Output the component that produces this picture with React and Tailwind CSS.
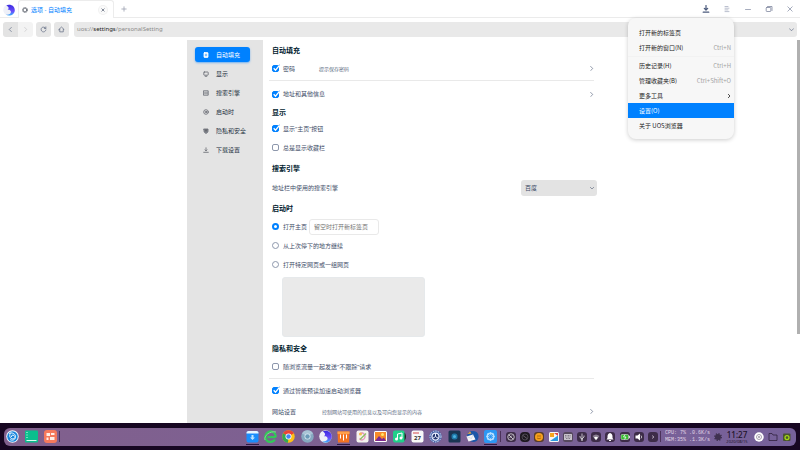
import React, { useState } from 'react';

const line = { fill: 'none', stroke: 'currentColor', strokeWidth: 1, strokeLinecap: 'round', strokeLinejoin: 'round' };

function Chevron({ dir = 'right', className = 'size-[6px]', weight = '.8' }) {
  const paths = { right: 'M2 .5 4.5 3 2 5.5', left: 'M4 .5 1.5 3 4 5.5', down: 'M.5 2 3 4.5 5.5 2' };
  return (
    <svg viewBox="0 0 6 6" className={className} {...line} strokeWidth={weight}>
      <path d={paths[dir]} />
    </svg>
  );
}

function BrowserLogo({ className }) {
  return (
    <svg viewBox="0 0 26 26" className={className}>
      <defs>
        <linearGradient id="moon" x1="0" y1="0" x2="0" y2="1">
          <stop offset="0" stopColor="#3b2be0" />
          <stop offset=".6" stopColor="#6a4dfa" />
          <stop offset="1" stopColor="#38b4fb" />
        </linearGradient>
      </defs>
      <circle cx="13" cy="13" r="12.5" fill="#eef0f8" />
      <path d="M7 3C17-1 26 5 25.500 14c-1 10-12 14-19.500 9 8 1 12-3 11-7-1-3-4-4-7-3 4-4 2-8-3-10Z" fill="url(#moon)" />
    </svg>
  );
}

/* ---------- window chrome ---------- */

function TabBar() {
  const control = 'flex h-full w-[21px] items-center justify-center';
  return (
    <header className="flex h-[18px] shrink-0 items-stretch border-b border-[#ebebeb]">
      <div className="flex w-[18px] items-center justify-center pt-[2px]">
        <BrowserLogo className="size-[12px]" />
      </div>
      <div className="-mb-px flex w-[96px] items-center rounded-t-[3px] border-x border-t border-[#ececec] bg-white pr-[6px] pl-[3px]">
        <svg viewBox="0 0 6 6" className="size-[6px] text-[#555b66]" {...line}>
          <circle cx="3" cy="3" r="1.9" strokeWidth=".8" />
          <circle cx="3" cy="3" r="2.6" strokeWidth=".5" strokeDasharray="1 1" />
        </svg>
        <span className="ml-[3px] text-[6px] leading-[8px] text-[#0081ff]">选项 - 自动填充</span>
        <button aria-label="关闭标签页" className="ml-auto flex size-[8px] items-center justify-center rounded-full bg-[#fafafa] text-[#505a6e] ring-1 ring-[#f1f1f1]">
          <svg viewBox="0 0 4 4" className="size-[4px]" {...line} strokeWidth=".7"><path d="m.8.8 2.400 2.400M3.200.8.8 3.200" /></svg>
        </button>
      </div>
      <button aria-label="新建标签页" className="flex w-[19px] items-center justify-center text-[#9aa0ae]">
        <svg viewBox="0 0 6 6" className="size-[6px]" {...line} strokeWidth=".8"><path d="M3 .8v4.400M.8 3h4.400" /></svg>
      </button>
      <div className="ml-auto flex text-[#8088a0]">
        <button aria-label="下载" className={`${control} text-[#4b5a7c]`}>
          <svg viewBox="0 0 8 8" className="size-[8px]" {...line}><path d="M4 .5v4.2M2.3 3.3 4 5l1.700-1.700M1.200 7.200h5.600" strokeWidth="1.200" /></svg>
        </button>
        <button aria-label="菜单" className={`${control} text-[#b3b9c8]`}>
          <svg viewBox="0 0 8 8" className="size-[8px]" {...line} strokeWidth=".9"><path d="M2 1.500h3M2 3.200h4M2 4.900h3M2 6.600h4" /></svg>
        </button>
        <button aria-label="最小化" className={control}>
          <svg viewBox="0 0 6 6" className="size-[6px]" {...line} strokeWidth=".7"><path d="M.5 3.500h5" /></svg>
        </button>
        <button aria-label="还原" className={control}>
          <svg viewBox="0 0 8 8" className="size-[8px]" {...line} strokeWidth=".8"><rect x="1.200" y="2.500" width="4.600" height="4" rx=".6" /><path d="M2.500 1.500h4.500v4" /></svg>
        </button>
        <button aria-label="关闭" className={control}>
          <svg viewBox="0 0 6 6" className="size-[6px]" {...line} strokeWidth=".7"><path d="m.8.8 4.400 4.400M5.200.8.8 5.200" /></svg>
        </button>
      </div>
    </header>
  );
}

function AddressBar() {
  const box = 'flex h-[15px] w-[15px] items-center justify-center';
  return (
    <div className="flex h-[22px] shrink-0 items-center gap-[3px] px-[3px] text-[#5b6780]">
      <div className="flex overflow-hidden rounded-[3px]">
        <button aria-label="后退" className={`${box} bg-[#e3e3e3]`}><Chevron dir="left" className="size-[5px]" /></button>
        <button aria-label="前进" className={`${box} bg-[#f3f3f3] text-[#c3c3c6]`}><Chevron className="size-[5px]" /></button>
      </div>
      <button aria-label="刷新" className={`${box} rounded-[3px] bg-[#e6e6e6]`}>
        <svg viewBox="0 0 8 8" className="size-[7px]" {...line} strokeWidth=".8"><path d="M6.500 2.600A2.800 2.800 0 1 0 6.800 4.500M6.700 1v1.800H5" /></svg>
      </button>
      <button aria-label="主页" className={`${box} rounded-[3px] bg-[#e6e6e6]`}>
        <svg viewBox="0 0 8 8" className="size-[7px]" {...line} strokeWidth=".8"><path d="M1 4 4 1.200 7 4H6v2.700H2V4Z" /></svg>
      </button>
      <div className="ml-[2px] flex h-[15px] flex-1 items-center rounded-[3px] bg-[#e9e9e9] px-[3px]">
        <div className="flex-1 text-[6px] leading-[8px] text-[#8c8c8c]">
          uos://<span className="text-[#222]">settings</span>/personalSetting
        </div>
        <button aria-label="展开地址栏"><Chevron dir="down" className="size-[5px]" /></button>
      </div>
    </div>
  );
}

function MenuItem({ label, hint, more, active }) {
  return (
    <button
      role="menuitem"
      className={`flex h-[15px] w-full items-center pr-[3px] pl-[11px] text-[6px] leading-[8px] ${active ? 'bg-[#0081ff] text-white' : 'text-[#222]'}`}
    >
      {label}
      {hint && <span className="ml-auto text-[#a3a3a3]">{hint}</span>}
      {more && <span className="ml-auto"><Chevron className="size-[4px]" weight="1.200" /></span>}
    </button>
  );
}

function AppMenu() {
  return (
    <div role="menu" className="absolute top-[18px] right-[66px] z-10 w-[106px] overflow-hidden rounded-[8px] bg-[#f7f7f7] pt-[7px] pb-[6px] font-['Noto_Sans_CJK_SC',sans-serif] shadow-[0_1px_4px_rgba(0,0,0,0.2)]">
      <MenuItem label="打开新的标签页" />
      <MenuItem label="打开新的窗口(N)" hint="Ctrl+N" />
      <hr className="my-px border-[#f2f2f2]" />
      <MenuItem label="历史记录(H)" hint="Ctrl+H" />
      <MenuItem label="管理收藏夹(B)" hint="Ctrl+Shift+O" />
      <MenuItem label="更多工具" more />
      <MenuItem label="设置(O)" active />
      <MenuItem label="关于 UOS浏览器" />
    </div>
  );
}

/* ---------- settings page ---------- */

const sections = [
  { label: '自动填充', icon: <><rect x="1" y=".6" width="4" height="4.800" rx=".5" fill="currentColor" /><path d="M2.200 2.300h1.600M2.200 3.700h1.600" stroke="#0081ff" strokeWidth=".6" /></> },
  { label: '显示', icon: <><rect x=".8" y="1" width="4.400" height="3.200" rx=".5" /><path d="M2.200 5.300h1.600" /></> },
  { label: '搜索引擎', icon: <><rect x=".8" y=".8" width="4.400" height="4.400" /><path d="M1.500 2.300h3M1.500 3.700h3" strokeWidth=".6" /></> },
  { label: '启动时', icon: <><circle cx="3" cy="3" r="2.300" /><circle cx="3" cy="3" r=".7" /></> },
  { label: '隐私和安全', icon: <><path d="M1 1h4v2.200C5 4.300 4 5 3 5.400 2 5 1 4.300 1 3.200Z" fill="#8b8e96" /><path d="M3 2v1.200" stroke="#333" /></> },
  { label: '下载设置', icon: <path d="M3 .8v2.900M2 2.900l1 1 1-1M.7 5.300h4.600" /> },
];

function Sidebar() {
  return (
    <nav className="flex w-[76px] shrink-0 flex-col gap-1 bg-[#e4e4e4] px-2 pt-[7px]">
      {sections.map((s, i) => (
        <button
          key={s.label}
          className={`flex h-[15px] w-[55px] shrink-0 items-center gap-[7px] rounded-[3px] pl-2 text-[6px] leading-[8px] whitespace-nowrap ${
            i === 0 ? 'bg-[#0081ff] text-white shadow-[0_1px_2px_rgba(0,129,255,0.5)]' : 'text-[#1c3040]'
          }`}
        >
          <svg viewBox="0 0 6 6" className={`size-[6px] shrink-0 ${i === 0 ? '' : 'text-[#62656d]'}`} {...line} strokeWidth=".8">{s.icon}</svg>
          {s.label}
        </button>
      ))}
    </nav>
  );
}

function Heading({ children }) {
  return <h2 className="h-3 pl-[3px] text-[7px] leading-[12px] font-bold text-[#001a2e]">{children}</h2>;
}

function Check({ label, checked }) {
  const [on, setOn] = useState(!!checked);
  return (
    <label className="flex items-center gap-1">
      <span className="relative flex size-[7px]">
        <input
          type="checkbox"
          checked={on}
          onChange={(e) => setOn(e.target.checked)}
          className="peer size-[7px] appearance-none rounded-[2px] border border-[#8d97ac] bg-white checked:border-[#0081ff] checked:bg-[#0081ff]"
        />
        <svg viewBox="0 0 8 8" className="pointer-events-none absolute -top-px left-0 hidden size-[8px] peer-checked:block" fill="none">
          <path d="m1.700 4.300 1.800 1.900L7.200 1.700" stroke="#fff" strokeWidth="1.300" />
          <path d="M6.600 1.800 7.700.6" stroke="#0081ff" strokeWidth=".8" />
        </svg>
      </span>
      {label}
    </label>
  );
}

function Radio({ label, value, current, onPick }) {
  return (
    <label className="flex items-center gap-1">
      <input
        type="radio"
        name="startup"
        checked={value === current}
        onChange={() => onPick(value)}
        className="size-[7px] appearance-none rounded-full border border-[#8d97ac] bg-white checked:border-2 checked:border-[#0081ff]"
      />
      {label}
    </label>
  );
}

function Row({ size = 'h-[19px]', note, noteGap = 'pl-6', more, children }) {
  return (
    <div className={`flex items-center pr-[3px] pl-[3px] ${size}`}>
      {children}
      {note && <span className={`text-[5px] leading-[8px] text-[#5b6b80] ${noteGap}`}>{note}</span>}
      {more && (
        <button aria-label="展开" className="ml-auto text-[#5b6780]">
          <Chevron className="size-[5px]" />
        </button>
      )}
    </div>
  );
}

function Settings() {
  const [startup, setStartup] = useState('home');
  return (
    <div className="flex-1 pt-[5px] pr-4 pl-[6px] text-[6px] leading-[8px] text-[#414d68]">
      <Heading>自动填充</Heading>
      <Row size="h-[23px]" note="提示保存密码" more><Check label="密码" checked /></Row>
      <hr className="mr-[3px] border-[#e9e9e9]" />
      <Row size="h-[26px]" more><Check label="地址和其他信息" checked /></Row>

      <Heading>显示</Heading>
      <Row><Check label="显示“主页”按钮" checked /></Row>
      <Row><Check label="总是显示收藏栏" /></Row>

      <div className="mt-[6px]">
        <Heading>搜索引擎</Heading>
        <div className="flex h-[25px] items-center pl-[3px]">
          <label htmlFor="engine">地址栏中使用的搜索引擎</label>
          <div className="relative ml-auto">
            <select id="engine" className="h-4 w-[76px] appearance-none rounded-[3px] bg-[#e3e3e3] px-1 text-[6px] leading-[8px]">
              <option>百度</option>
              <option>必应</option>
              <option>搜狗</option>
            </select>
            <span className="pointer-events-none absolute inset-y-0 right-[3px] flex items-center"><Chevron dir="down" className="size-[4px]" /></span>
          </div>
        </div>
      </div>

      <div className="mt-[3px]">
        <Heading>启动时</Heading>
        <div className="mt-[2px]">
          <Row>
            <Radio label="打开主页" value="home" current={startup} onPick={setStartup} />
            <input
              type="text"
              aria-label="主页地址"
              placeholder="留空时打开新标签页"
              className="ml-[2px] h-4 w-[70px] rounded-[3px] border border-[#e9e9e9] px-1 text-[6px] leading-[8px] placeholder:text-[#757575]"
            />
          </Row>
          <Row><Radio label="从上次停下的地方继续" value="resume" current={startup} onPick={setStartup} /></Row>
          <Row><Radio label="打开特定网页或一组网页" value="pages" current={startup} onPick={setStartup} /></Row>
        </div>
        <textarea aria-label="启动网页列表" className="mt-[3px] ml-[13px] block h-[60px] w-[143px] resize-none rounded-[3px] border border-[#e6e9eb] bg-[#eaeaea]" />
      </div>

      <div className="mt-[6px]">
        <Heading>隐私和安全</Heading>
        <Row size="h-[23px]"><Check label="随浏览流量一起发送“不跟踪”请求" /></Row>
        <hr className="mr-[3px] border-[#e9e9e9]" />
        <Row size="h-[23px]"><Check label="通过智能预读加速启动浏览器" checked /></Row>
        <Row note="控制网站可使用的信息以及可向您显示的内容" noteGap="pl-[26px]" more>网站设置</Row>
      </div>
    </div>
  );
}

/* ---------- dock ---------- */

const launcherIcons = [
  <><circle cx="13" cy="13" r="12.500" fill="#eef8ff" /><circle cx="13" cy="13" r="10.500" fill="#1685dc" /><path d="M6 7c7-3 14 1 13 8-1 5-7 7-11 4M10 5c-5 6-2 13 4 13 4 0 5-5 2-7-3-2-6 0-5 3" fill="none" stroke="#e8f6ff" strokeWidth="2" /></>,
  <><rect y="1" width="26" height="24" rx="2" fill="#0bbf8d" /><path d="M3 5h2M3 10h2M3 15h2M3 21h20" stroke="#d8fff2" strokeWidth="2" /></>,
  <><rect width="26" height="26" rx="6" fill="#f5795c" /><path d="M5 6h7v6H5zM14 6h7v4h-7zM5 15h4v5H5zM12 14h9v6h-9z" fill="#fff0e8" /></>,
];

const appIcons = [
  <><rect x="1" y="2" width="24" height="23" rx="4" fill="#1b8dfb" /><path d="M1 7V5q0-3 4-3h16q4 0 4 3v2Z" fill="#e9f6ff" /><path d="M11 10h4v5h3l-5 5-5-5h3Z" fill="#bfe5ff" /></>,
  <><path d="M22 19a10.500 10.500 0 1 1 1.500-7q0 2-2 2H7" fill="none" stroke="#33c759" strokeWidth="4.500" /><path d="M2 20C-1 12 12 1 24 4" fill="none" stroke="#7be08d" strokeWidth="2" /></>,
  <><circle cx="13" cy="13" r="12.500" fill="#fbc116" /><path d="M13 13 2.200 6.700A12.500 12.500 0 0 1 23.800 6.700Z" fill="#ea4335" /><path d="M13 13 2.200 6.700A12.500 12.500 0 0 0 12 25.500Z" fill="#34a853" /><circle cx="13" cy="13" r="6" fill="#fff" /><circle cx="13" cy="13" r="4.500" fill="#4285f4" /></>,
  <><circle cx="13" cy="13" r="12.500" fill="#86a9c1" /><path d="M13 13 2 7a12.500 12.500 0 0 1 22 0Z" fill="#a9c4d6" /><circle cx="13" cy="13" r="6" fill="#d9e8f2" /><circle cx="13" cy="13" r="4.500" fill="#6b9ab8" /></>,
  null,
  <><path d="M1 3h24l-1 22H2Z" fill="#f37221" /><path d="M1 3h24v5H1Z" fill="#ffa04b" /><path d="M7 9v8M13 9v12M19 9v8" stroke="#fff" strokeWidth="2" /></>,
  <><rect x="1" y="1" width="24" height="24" rx="4" fill="#f4f2ee" /><path d="M7 9c5-7 12-1 11 5s-8 8-11 3" fill="none" stroke="#e59bc0" strokeWidth="3" /><path d="M8 19 20 7" stroke="#8abf63" strokeWidth="2.500" /><circle cx="9" cy="8" r="3" fill="#f5bd52" /></>,
  <><rect y="2" width="26" height="22" rx="3" fill="#fff" /><rect x="2" y="4" width="22" height="18" fill="#f78b2a" /><path d="m2 22 8-10 6 6 4-3 4 7Z" fill="#7e2a92" /><circle cx="17" cy="9" r="3" fill="#ffe56b" /></>,
  <><path d="M20 3q6 3 6 10t-6 10Z" fill="#222" /><rect y="1" width="23" height="24" rx="4" fill="#20d18a" /><path d="M9 18V8l9-2v10" fill="none" stroke="#fff" strokeWidth="2" /><circle cx="7" cy="18" r="3" fill="#fff" /><circle cx="16" cy="16" r="3" fill="#fff" /></>,
  <><rect x="1" y="1" width="24" height="24" rx="4" fill="#f8f8f8" /><path d="M4 6h12" stroke="#d54b4b" strokeWidth="2" /><text x="13" y="20" fontSize="12" fontWeight="bold" textAnchor="middle" fill="#333">27</text></>,
  <><circle cx="13" cy="13" r="12.500" fill="#4560a8" /><circle cx="13" cy="13" r="11" fill="none" stroke="#dfe6f5" strokeWidth="2" strokeDasharray="3 2" /><circle cx="13" cy="13" r="7" fill="#23356f" stroke="#e8efff" strokeWidth="2.500" /><path d="M13 13V6M13 13l6 4M13 13l-6 4" stroke="#e8efff" strokeWidth="2" /></>,
  <><rect x="1" y="1" width="24" height="24" rx="3" fill="#1a3553" /><rect x="7" y="7" width="12" height="12" rx="5" fill="#1f78a8" /><circle cx="13" cy="13" r="3" fill="#4bb1df" /></>,
  <><path d="M2 12C3 3 14-1 21 4c6 5 5 14 0 18-5 3-11 2-14-1Z" fill="#1a56a8" /><path d="m1 13 13-4 5 10-14 4Z" fill="#f5f7fa" /><path d="m1 13 10 4 3-8" fill="none" stroke="#b5c2d1" /><path d="M3 8 8 3l3 4Z" fill="#e6a83a" /></>,
  <><rect width="26" height="26" rx="4" fill="#2d97f3" /><circle cx="13" cy="13" r="6.500" fill="none" stroke="#b9e0ff" strokeWidth="3" /><path d="M13 4v18M4 13h18M7 7l12 12M19 7 7 19" stroke="#b9e0ff" strokeWidth="1.500" /><circle cx="13" cy="13" r="3" fill="#2d97f3" /></>,
];

const trayIcons = [
  <><rect width="20" height="20" rx="6" fill="#3d2c48" /><circle cx="10" cy="10" r="6.500" fill="none" stroke="#eee" strokeWidth="1.500" /><path d="m6 6 8 8M7 12l5-5" stroke="#eee" strokeWidth="1.500" /></>,
  <><rect width="20" height="20" rx="8" fill="#1d1820" /><circle cx="10" cy="10" r="6" fill="none" stroke="#5a5560" strokeWidth="1.500" /><path d="m6 7 8 6" stroke="#77727c" strokeWidth="1.500" /></>,
  <><rect width="20" height="20" rx="6" fill="#5a3c2c" /><circle cx="10" cy="10" r="8" fill="#f5a01e" /><path d="M6 8h8M6 12q4 3 8 0" stroke="#9b5a05" strokeWidth="1.500" fill="none" /></>,
  <><rect width="20" height="20" rx="3" fill="#f6f6f6" /><path d="M2 2h8v8H2Z" fill="#f7a51c" /><path d="M10 2h8v6Z" fill="#d44" /><path d="M2 18 18 7v11Z" fill="#2b9ae0" /></>,
  <><rect width="20" height="20" rx="5" fill="#56485e" /><rect x="2" y="4" width="16" height="12" rx="1" fill="#c9c4cd" /><path d="M4 7h12M4 10h12M6 13h8" stroke="#6d6473" strokeWidth="1.500" strokeDasharray="2 1" /></>,
  <><rect width="20" height="20" rx="6" fill="#3d2c48" /><path d="M10 3v14M6 8v3l4 3 4-4V7" fill="none" stroke="#eee" strokeWidth="1.500" /><circle cx="10" cy="16" r="1.500" fill="#eee" /></>,
  <><rect width="20" height="20" rx="6" fill="#3d2c48" /><path d="M3 8q7-6 14 0l-7 9Z" fill="#8b8092" /><path d="M6 11q4-3 8 0l-4 5Z" fill="#fff" /></>,
  <><rect width="20" height="20" rx="6" fill="#3d2c48" /><path d="M10 2q5 1 5 7v3l2 3H3l2-3V9q0-6 5-7ZM8 16h4v2H8Z" fill="#fff" /></>,
  <><rect width="20" height="20" rx="5" fill="#3d2c48" /><rect x="2" y="5" width="15" height="10" rx="2" fill="#38bd32" stroke="#eee" /><path d="M17 8h2v4h-2M10 5l-3 5h5l-3 5" fill="none" stroke="#fff" strokeWidth="1.500" /></>,
  <><rect width="20" height="20" rx="6" fill="#3d2c48" /><path d="M3 7h4l5-4v14l-5-4H3Z" fill="#fff" /><path d="M14 7q3 3 0 6" fill="none" stroke="#ddd" strokeWidth="1.500" /></>,
  <><rect width="20" height="20" rx="6" fill="#3d2c48" /><path d="m8 7 4 3-4 3" fill="none" stroke="#c9bfd0" strokeWidth="1.500" /></>,
];

const appNames = ['应用商店', '360浏览器', 'Chrome', 'Chromium', 'UOS浏览器', '购物', '画板', '相册', '音乐', '日历', '控制中心', '截图', '邮件', '设置'];
const trayNames = ['网络', '录制', '助手', '输入法', '键盘', 'USB', '无线', '通知', '电池', '音量', '更多'];
const launcherNames = ['启动器', '多任务视图', '应用'];

function Divider() {
  return <span className="h-[11px] w-px shrink-0 bg-[#4b325a]" />;
}

function Dock() {
  return (
    <footer className="flex h-[27px] shrink-0 items-center bg-[#170722] px-1">
      <div className="flex h-[18px] flex-1 items-center rounded-[6px] bg-linear-to-r from-[#81608d] to-[#76619a] pr-1 pl-[2px]">
        <div className="mr-[2px] flex items-center gap-[6px]">
          {launcherIcons.map((icon, i) => (
            <button key={i} aria-label={launcherNames[i]}><svg viewBox="0 0 26 26" className="size-[13px]">{icon}</svg></button>
          ))}
        </div>
        <Divider />
        <div className="ml-auto flex w-[257px] shrink-0">
          {appIcons.map((icon, i) => (
            <button key={i} aria-label={appNames[i]} className={`flex h-[18px] flex-1 items-center justify-center border-b border-transparent pt-px`}>
              <span className={`flex h-[17px] items-center border-b ${[0, 5, 13].includes(i) ? 'border-[#2e1a45]' : 'border-transparent'}`}>
                {icon ? <svg viewBox="0 0 26 26" className="size-[13px]">{icon}</svg> : <BrowserLogo className="size-[13px]" />}
              </span>
            </button>
          ))}
        </div>
        <Divider />
        <div className="ml-[3px] flex w-[156px] shrink-0">
          {trayIcons.map((icon, i) => (
            <button key={i} aria-label={trayNames[i]} className="flex flex-1 items-center justify-center">
              <svg viewBox="0 0 20 20" className="size-[10px]">{icon}</svg>
            </button>
          ))}
        </div>
        <Divider />
        <div className="ml-1 h-[14px] w-[46px] shrink-0 overflow-hidden font-['Liberation_Mono',monospace] text-[5px] leading-[7px] whitespace-pre text-[#e2d6e6]">
          <div>CPU: 7% .0.6K/s</div>
          <div>MEM:35% .1.3K/s</div>
        </div>
        <svg viewBox="0 0 16 16" className="mx-[3px] size-[8px] shrink-0">
          <circle cx="8" cy="8" r="6" fill="#3f3150" />
          <circle cx="8" cy="8" r="6.500" fill="none" stroke="#3f3150" strokeWidth="3" strokeDasharray="2.500 2.600" />
        </svg>
        <div className="w-[24px] shrink-0 text-center whitespace-nowrap text-[#1d1228]">
          <div className="text-[8px] leading-[9px] font-medium">11:27</div>
          <div className="text-[4px] leading-[5px]">2020/08/15</div>
        </div>
        <div className="ml-[5px] flex shrink-0 items-center gap-1">
          <button aria-label="桌面"><svg viewBox="0 0 20 20" className="size-[10px]"><circle cx="10" cy="10" r="9.500" fill="#fff" /><circle cx="10" cy="10" r="5" fill="none" stroke="#8a8094" strokeWidth="1.500" /><circle cx="10" cy="10" r="1.500" fill="#4a3d55" /></svg></button>
          <button aria-label="文件"><svg viewBox="0 0 20 20" className="size-[10px]"><path d="M2 3h6l2 3h8v11H2Z" fill="none" stroke="#2c1e38" strokeWidth="1.500" /></svg></button>
          <button aria-label="回收站"><svg viewBox="0 0 20 20" className="size-[10px]"><rect x="2" y="3" width="15" height="15" rx="2" fill="#49552d" /><circle cx="10" cy="11" r="4" fill="none" stroke="#a6d914" strokeWidth="2.500" /></svg></button>
        </div>
      </div>
    </footer>
  );
}

export default function App() {
  return (
    <div className="relative flex h-screen flex-col overflow-hidden bg-white font-['Noto_Sans','Noto_Sans_CJK_SC',sans-serif]">
      <TabBar />
      <AddressBar />
      <main className="flex min-h-0 flex-1 overflow-hidden">
        <div className="mx-auto flex w-full max-w-[426px]">
          <Sidebar />
          <Settings />
        </div>
      </main>
      <div className="absolute top-10 right-0 h-[294px] w-[3px] bg-[#b0b0b0]" />
      <AppMenu />
      <Dock />
    </div>
  );
}
